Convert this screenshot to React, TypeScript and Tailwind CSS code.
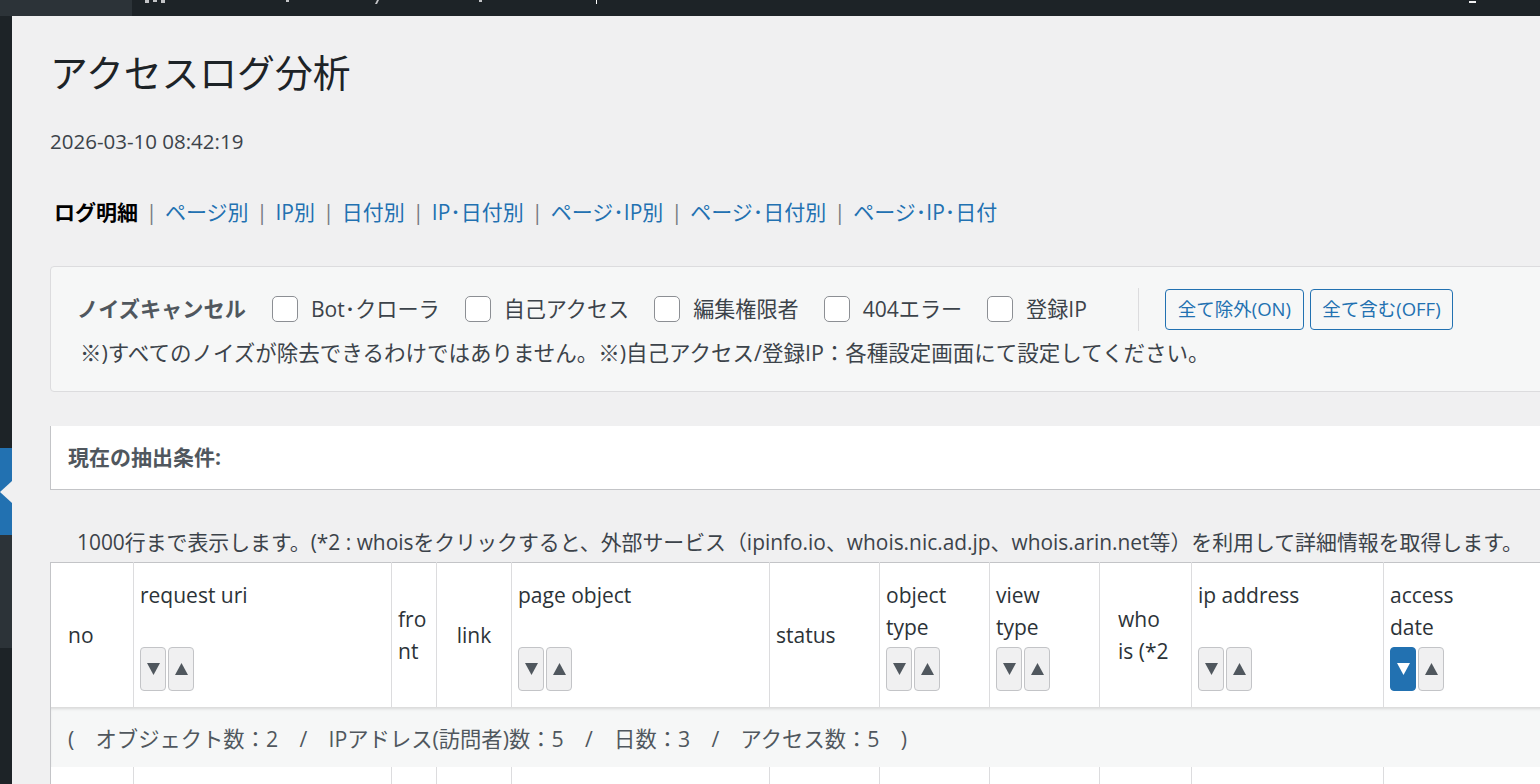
import React from "react";

const Down = ({ white = false }: { white?: boolean }) => (
  <svg width="13" height="12" viewBox="0 0 13 12">
    <polygon points="0,0 13,0 6.5,12" fill={white ? "#ffffff" : "#50575e"} />
  </svg>
);
const Up = () => (
  <svg width="13" height="12" viewBox="0 0 13 12">
    <polygon points="0,12 13,12 6.5,0" fill="#50575e" />
  </svg>
);

const SortBtns = ({ active = false }: { active?: boolean }) => (
  <div className="flex gap-[2px] mt-[4px]">
    <div
      className={
        active
          ? "w-[26px] h-[44px] rounded-[4px] border border-[#2271b1] bg-[#2271b1] flex items-center justify-center"
          : "w-[26px] h-[44px] rounded-[4px] border border-[#c3c4c7] bg-[#f0f0f1] flex items-center justify-center"
      }
    >
      <Down white={active} />
    </div>
    <div className="w-[26px] h-[44px] rounded-[4px] border border-[#c3c4c7] bg-[#f0f0f1] flex items-center justify-center">
      <Up />
    </div>
  </div>
);

const Check = ({ label }: { label: string }) => (
  <div className="flex items-center">
    <div className="w-[26px] h-[26px] rounded-[5px] border border-[#8c8f94] bg-white" />
    <span className="ml-[13px] text-[#3c434a]">{label}</span>
  </div>
);

export default function App() {
  const navItems = ["ページ別", "IP別", "日付別", "IP･日付別", "ページ･IP別", "ページ･日付別", "ページ･IP･日付"];
  const widths = [83, 258, 45, 75, 258, 110, 110, 110, 92, 192, 300];
  return (
    <div className="w-[1540px] h-[784px] overflow-hidden bg-[#f0f0f1] flex flex-col font-['Open_Sans','Noto_Sans_CJK_JP',sans-serif]">
      {/* admin bar */}
      <div className="h-[16px] w-full shrink-0 bg-[#1d2327] flex">
        <div className="w-[132px] h-full bg-[#2c3338]" />
        <svg width="1408" height="16" viewBox="0 0 1408 16">
          <rect x="13" y="0" width="4" height="3" fill="#c3c4c7" />
          <rect x="21" y="0" width="4" height="2" fill="#c3c4c7" />
          <rect x="29" y="0" width="4" height="3" fill="#c3c4c7" />
          <rect x="154" y="0" width="3" height="2" fill="#c3c4c7" />
          <polygon points="243,4 245,4 247,0 245,0" fill="#c3c4c7" />
          <rect x="347" y="0" width="3" height="2" fill="#c3c4c7" />
          <rect x="464" y="0" width="1" height="4" fill="#ffffff" />
          <rect x="1337" y="1" width="7" height="2" fill="#f0f0f1" />
        </svg>
      </div>
      <div className="flex flex-1 min-h-0">
        {/* sidebar */}
        <div className="w-[12px] shrink-0 flex flex-col">
          <div className="h-[432px] bg-[#1d2327]" />
          <div className="h-[87px] bg-[#2271b1] flex items-center">
            <svg width="12" height="22" viewBox="0 0 12 22">
              <polygon points="0,11 12,0 12,22" fill="#f0f0f1" />
            </svg>
          </div>
          <div className="h-[113px] bg-[#2c3338]" />
          <div className="flex-1 bg-[#1d2327]" />
        </div>
        {/* main */}
        <div className="flex-1 min-w-0 overflow-hidden pl-[38px]">
          <div className="w-[1640px]">
            <h1 className="mt-[33px] text-[37.8px] leading-[48px] text-[#1d2327] font-normal">アクセスログ分析</h1>
            <div className="mt-[31px] text-[20.5px] leading-[27px] text-[#3c434a]">2026-03-10 08:42:19</div>
            <div className="mt-[42px] pl-[4px] flex items-center gap-[7.7px] text-[21px] leading-[30px]">
              <span className="font-bold text-black">ログ明細</span>
              {navItems.map((t) => (
                <React.Fragment key={t}>
                  <span className="text-[#787c82]">|</span>
                  <span className="text-[#2271b1]">{t}</span>
                </React.Fragment>
              ))}
            </div>

            {/* noise panel */}
            <div className="mt-[39px] border border-[#dcdcde] rounded-[4px] bg-[#f6f7f7] pl-[26px] pt-[21px] pb-[23px] text-[21px] leading-[30px]">
              <div className="flex items-center h-[42px]">
                <span className="font-bold text-[#50575e] mr-[26px] text-[21.2px]">ノイズキャンセル</span>
                <div className="flex items-center gap-[25px] text-[21.1px]">
                  <Check label="Bot･クローラ" />
                  <Check label="自己アクセス" />
                  <Check label="編集権限者" />
                  <Check label="404エラー" />
                  <Check label="登録IP" />
                </div>
                <div className="ml-[51px] w-px h-[43px] bg-[#dcdcde]" />
                <div className="ml-[26px] flex gap-[6px] text-[18.5px]">
                  <div className="w-[139px] h-[41px] rounded-[4px] border border-[#2271b1] text-[#2271b1] bg-[#f6f7f7] flex items-center justify-center">全て除外(ON)</div>
                  <div className="w-[143px] h-[41px] rounded-[4px] border border-[#2271b1] text-[#2271b1] bg-[#f6f7f7] flex items-center justify-center">全て含む(OFF)</div>
                </div>
              </div>
              <div className="mt-[8px] pl-[3px] text-[21.5px] text-[#3c434a]">
                ※)すべてのノイズが除去できるわけではありません。※)自己アクセス/登録IP：各種設定画面にて設定してください。
              </div>
            </div>

            {/* current condition */}
            <div className="mt-[34px] bg-white border-l border-b border-[#c3c4c7] h-[64px] pl-[17px] flex items-center text-[21px]">
              <span className="font-bold text-[#50575e]">現在の抽出条件:</span>
            </div>

            <div className="mt-[37px] pl-[27px] text-[20.9px] leading-[30px] text-[#3c434a]">
              1000行まで表示します。(*2 : whoisをクリックすると、外部サービス（ipinfo.io、whois.nic.ad.jp、whois.arin.net等）を利用して詳細情報を取得します。
            </div>

            {/* table */}
            <table className="mt-[5px] table-fixed border-collapse bg-white text-[21px] leading-[32px] text-[#2c3338]">
              <colgroup>
                {widths.map((w, i) => (
                  <col key={i} style={{ width: w }} />
                ))}
              </colgroup>
              <thead>
                <tr className="h-[144px]">
                  <th className="border-t border-l border-[#c3c4c7] border-r border-r-[#dcdcde] font-normal text-left align-middle pl-[17px]">no</th>
                  <th className="border-t border-t-[#c3c4c7] border-r border-[#dcdcde] font-normal text-left align-middle pl-[6px]">
                    <div>request uri</div>
                    <div className="h-[32px]" />
                    <SortBtns />
                  </th>
                  <th className="border-t border-t-[#c3c4c7] border-r border-[#dcdcde] font-normal text-left align-middle pl-[6px]">
                    fro<br />nt
                  </th>
                  <th className="border-t border-t-[#c3c4c7] border-r border-[#dcdcde] font-normal text-center align-middle">link</th>
                  <th className="border-t border-t-[#c3c4c7] border-r border-[#dcdcde] font-normal text-left align-middle pl-[6px]">
                    <div>page object</div>
                    <div className="h-[32px]" />
                    <SortBtns />
                  </th>
                  <th className="border-t border-t-[#c3c4c7] border-r border-[#dcdcde] font-normal text-left align-middle pl-[6px]">status</th>
                  <th className="border-t border-t-[#c3c4c7] border-r border-[#dcdcde] font-normal text-left align-middle pl-[6px]">
                    <div>object</div>
                    <div>type</div>
                    <SortBtns />
                  </th>
                  <th className="border-t border-t-[#c3c4c7] border-r border-[#dcdcde] font-normal text-left align-middle pl-[6px]">
                    <div>view</div>
                    <div>type</div>
                    <SortBtns />
                  </th>
                  <th className="border-t border-t-[#c3c4c7] border-r border-[#dcdcde] font-normal text-left align-middle pl-[18px]">
                    who<br />is (*2
                  </th>
                  <th className="border-t border-t-[#c3c4c7] border-r border-[#dcdcde] font-normal text-left align-middle pl-[6px]">
                    <div>ip address</div>
                    <div className="h-[32px]" />
                    <SortBtns />
                  </th>
                  <th className="border-t border-t-[#c3c4c7] border-r border-[#dcdcde] font-normal text-left align-middle pl-[6px]">
                    <div>access</div>
                    <div>date</div>
                    <SortBtns active />
                  </th>
                </tr>
              </thead>
              <tbody>
                <tr className="h-[60px]">
                  <td
                    colSpan={11}
                    className="border-l border-[#c3c4c7] bg-[#f6f7f7] pl-[17px] pt-[4px] text-[21.3px] text-[#50575e] shadow-[inset_0_3px_3px_-1px_rgba(0,0,0,0.12)]"
                  >
                    (　オブジェクト数：2　/　IPアドレス(訪問者)数：5　/　日数：3　/　アクセス数：5　)
                  </td>
                </tr>
                <tr className="h-[60px]">
                  {widths.map((_, i) => (
                    <td
                      key={i}
                      className={
                        i === 0
                          ? "border-l border-l-[#c3c4c7] border-r border-r-[#dcdcde]"
                          : "border-r border-r-[#dcdcde]"
                      }
                    />
                  ))}
                </tr>
              </tbody>
            </table>
          </div>
        </div>
      </div>
    </div>
  );
}
